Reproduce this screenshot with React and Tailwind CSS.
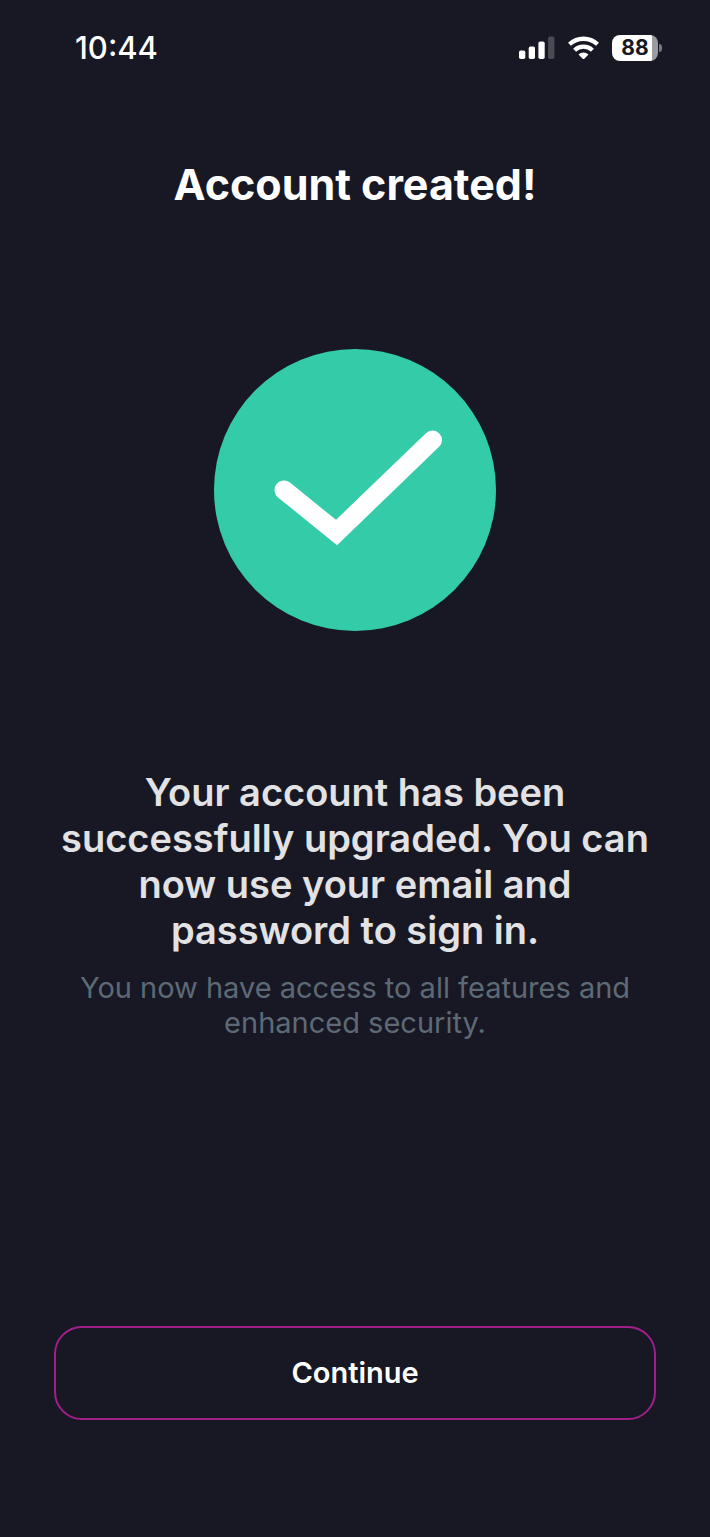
export default function App() {
  return (
    <div className="flex min-h-screen flex-col bg-[#171823] font-['Inter',sans-serif] text-white">
      <header className="flex h-24 items-center justify-between pl-[75px] pr-12">
        <time className="text-[31px] leading-8 font-medium">10:44</time>
        <div className="flex items-center gap-[13px]">
          <svg className="h-6 w-9" viewBox="0 0 36 24" fill="white" role="img" aria-label="Signal strength">
            <rect x="0" y="14.500" width="6.300" height="8.500" rx="1.800" />
            <rect x="9.700" y="10.500" width="6.300" height="12.500" rx="1.800" />
            <rect x="19.400" y="5.500" width="6.300" height="17.500" rx="1.800" />
            <rect x="29.100" y="0.500" width="6.300" height="22.500" rx="1.800" opacity="0.22" />
          </svg>
          <svg className="h-6 w-[31px]" viewBox="0 0 31 24" fill="none" stroke="white" strokeWidth="4.300" role="img" aria-label="Wi-Fi">
            <path d="M1.500 8.300a20.500 20.500 0 0 1 28 0" />
            <path d="M6.600 14.200a13 13 0 0 1 17.800 0" />
            <path d="M14.700 22.700l-4.200-4.200a7.300 7.300 0 0 1 10 0l-4.200 4.200q-.8.700-1.600 0z" fill="white" stroke="none" />
          </svg>
          <div className="flex items-center gap-px" role="img" aria-label="Battery 88 percent">
            <div className="flex h-[26px] w-[46px] items-center justify-center rounded-lg bg-linear-to-r from-white from-87% to-[#9a9aa0] to-87% text-[21px] leading-6 font-bold text-[#171823]">88</div>
            <div className="h-2 w-[3px] rounded-r-full bg-[#777881]" />
          </div>
        </div>
      </header>
      <main className="flex flex-1 flex-col items-center px-[54px] text-center">
        <h1 className="mt-[62px] text-[43px] leading-[52px] font-bold">Account created!</h1>
        <svg className="mt-[139px] size-[282px]" viewBox="0 0 282 282" role="img" aria-label="Success">
          <circle cx="141" cy="141" r="141" fill="#34cca8" />
          <path d="M70 141l52.500 42.500 96-92.500" fill="none" stroke="white" strokeWidth="19" strokeLinecap="round" />
        </svg>
        <h2 className="mt-[138px] text-[38px] leading-[46px] font-semibold text-[#e2e2e4]">Your account has been successfully upgraded. You can now use your email and password to sign in.</h2>
        <p className="mt-[17px] text-[29px] leading-[35px] text-[#5d6a76]">You now have access to all features and enhanced security.</p>
        <button className="mt-auto mb-[117px] h-[94px] w-full rounded-[28px] border-2 border-[#9f1f8b] text-[29px] font-semibold">Continue</button>
      </main>
    </div>
  );
}
